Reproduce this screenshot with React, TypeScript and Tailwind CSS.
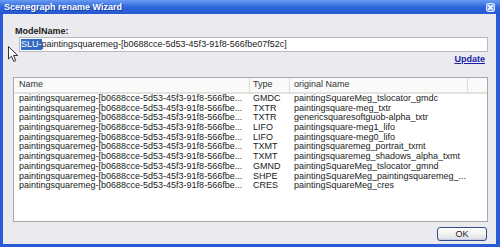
import React from "react";

const rows = [
  ["GMDC", "paintingSquareMeg_tslocator_gmdc"],
  ["TXTR", "paintingsquare-meg_txtr"],
  ["TXTR", "genericsquaresoftguob-alpha_txtr"],
  ["LIFO", "paintingsquare-meg1_lifo"],
  ["LIFO", "paintingsquare-meg0_lifo"],
  ["TXMT", "paintingsquaremeg_portrait_txmt"],
  ["TXMT", "paintingsquaremeg_shadows_alpha_txmt"],
  ["GMND", "paintingSquareMeg_tslocator_gmnd"],
  ["SHPE", "paintingSquareMeg_paintingsquaremeg_..."],
  ["CRES", "paintingSquareMeg_cres"],
];

const font = "font-['Liberation_Sans',Arial,sans-serif]";

function CloseButton() {
  return (
    <div className="w-[9px] h-[9px] rounded-[2px] border border-[#dfe8ff] bg-[#6f9af0] flex items-center justify-center">
      <svg width="7" height="7" viewBox="0 0 7 7">
        <path d="M1 1 L6 6 M6 1 L1 6" stroke="#fff" strokeWidth="1.6" />
      </svg>
    </div>
  );
}

function Cursor() {
  return (
    <svg
      className="absolute left-[8px] top-[46px]"
      width="12"
      height="17"
      viewBox="0 0 12 17"
    >
      <path
        d="M0.5 0.5 L0.5 13 L3.5 10.2 L5.8 15.5 L7.8 14.6 L5.6 9.5 L9.6 9.5 Z"
        fill="#fff"
        stroke="#333"
        strokeWidth="1"
        strokeLinejoin="round"
      />
    </svg>
  );
}

export default function App() {
  return (
    <div
      className={`relative w-[500px] h-[247px] flex flex-col bg-[#2a5bd6] text-[9px] text-[#1a1a1a] ${font}`}
    >
      {/* title bar */}
      <div className="h-[14px] shrink-0 flex items-center justify-between pl-[4px] pr-[5px] bg-linear-to-b from-[#6a9cf2] via-[#2f66db] to-[#2458d0]">
        <span className="text-white font-bold text-[9px] leading-none [text-shadow:1px_1px_0_#173f9e]">
          Scenegraph rename Wizard
        </span>
        <CloseButton />
      </div>

      {/* body */}
      <div className="flex-1 mx-[3px] mb-[3px] mr-[4px] bg-[#ebeaef] flex flex-col pl-[10px] pr-[8px]">
        <div className="mt-[12px] pl-[2px] font-bold leading-[10px]">
          ModelName:
        </div>
        <div className="mt-[1px] ml-[6px] h-[15px] bg-white border border-[#b4b9c2] flex items-center pl-[1px] leading-[11px] whitespace-nowrap">
          <span className="bg-[#316ac5] text-white">SLU-</span>
          <span>paintingsquaremeg-[b0688cce-5d53-45f3-91f8-566fbe07f52c]</span>
        </div>
        <div className="mt-[2px] flex justify-end pr-[3px]">
          <span className="font-bold text-[#1b1fa8] underline leading-[10px]">
            Update
          </span>
        </div>

        <div className="mt-[13px] h-[145px] bg-white border border-[#a5a7ad] flex flex-col overflow-hidden">
          <div className="h-[16px] shrink-0 flex border-b-[2px] border-[#e3e3dd] bg-[#fafafa] text-[#333]">
            <div className="w-[236px] pl-[5px] flex items-center border-r border-[#dcdcd6]">
              Name
            </div>
            <div className="w-[40px] pl-[3px] flex items-center border-r border-[#dcdcd6]">
              Type
            </div>
            <div className="w-[178px] pl-[4px] flex items-center border-r border-[#dcdcd6]">
              original Name
            </div>
            <div className="flex-1" />
          </div>
          <div className="flex flex-col">
            {rows.map(([type, orig], i) => (
              <div key={i} className="flex h-[9.7px] leading-[9.7px] whitespace-nowrap">
                <div className="w-[236px] pl-[5px] overflow-hidden">
                  paintingsquaremeg-[b0688cce-5d53-45f3-91f8-566fbe...
                </div>
                <div className="w-[40px] pl-[3px]">{type}</div>
                <div className="w-[178px] pl-[4px] overflow-hidden">{orig}</div>
              </div>
            ))}
          </div>
        </div>

        <div className="mt-[5px] flex justify-end pr-[1px]">
          <button className="w-[50px] h-[14px] rounded-[3px] border border-[#2f4f86] bg-linear-to-b from-[#ffffff] via-[#f2f2ef] to-[#d9dbe4] text-[9px] leading-none text-[#222] shadow-[inset_0_-1px_0_#c9cfe6]">
            OK
          </button>
        </div>
      </div>

      <Cursor />
    </div>
  );
}
